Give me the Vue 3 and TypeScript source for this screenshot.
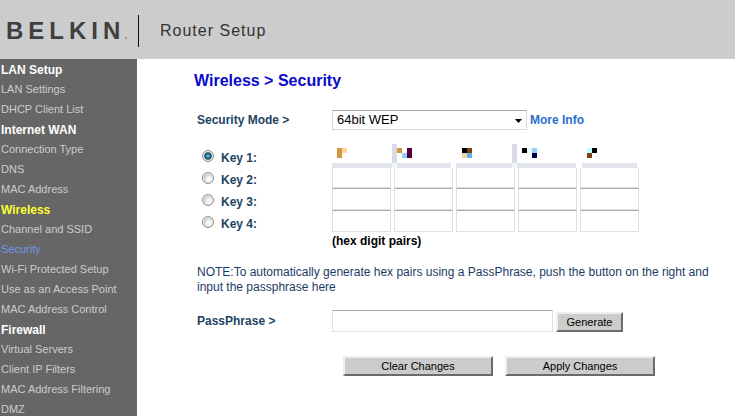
<script setup lang="ts">
import { ref } from 'vue'

interface NavGroup {
  title: string
  active?: boolean
  items: string[]
}

const groups: NavGroup[] = [
  { title: 'LAN Setup', items: ['LAN Settings', 'DHCP Client List'] },
  { title: 'Internet WAN', items: ['Connection Type', 'DNS', 'MAC Address'] },
  {
    title: 'Wireless',
    active: true,
    items: ['Channel and SSID', 'Security', 'Wi-Fi Protected Setup', 'Use as an Access Point', 'MAC Address Control'],
  },
  { title: 'Firewall', items: ['Virtual Servers', 'Client IP Filters', 'MAC Address Filtering', 'DMZ'] },
]

const current = 'Security'
const mode = ref('64bit WEP')
const activeKey = ref(1)
const passphrase = ref('')
const keys = ref<string[][]>(Array.from({ length: 4 }, () => Array<string>(5).fill('')))

function clearChanges() {
  passphrase.value = ''
  keys.value = keys.value.map((row) => row.map(() => ''))
}
</script>

<template>
  <div class="page">
    <header class="top">
      <div class="logo">BELKIN<span class="dot"></span></div>
      <div class="product">Router Setup</div>
    </header>
    <div class="body">
      <nav class="side">
        <template v-for="g in groups" :key="g.title">
          <h2 :class="{ active: g.active }">{{ g.title }}</h2>
          <a v-for="item in g.items" :key="item" href="#" :class="{ current: item === current }">{{ item }}</a>
        </template>
      </nav>
      <main class="content">
        <h1>Wireless &gt; Security</h1>
        <form @submit.prevent>
          <div class="row mode">
            <label class="name" for="mode">Security Mode &gt;</label>
            <div class="select">
              <select id="mode" v-model="mode">
                <option>Disabled</option>
                <option>64bit WEP</option>
                <option>128bit WEP</option>
              </select>
              <svg class="arrow" viewBox="0 0 7 4" aria-hidden="true"><path d="M0 0h7L3.5 4z" /></svg>
            </div>
            <a class="more" href="#">More Info</a>
          </div>

          <div class="keys">
            <div v-for="(row, r) in keys" :key="r" class="row key">
              <label class="name pick"><input v-model="activeKey" type="radio" name="key" :value="r + 1" />Key {{ r + 1 }}:</label>
              <div class="pairs" :class="{ masked: r === 0 }">
                <input v-for="(_, c) in row" :key="c" v-model="row[c]" type="text" maxlength="2" :aria-label="`Key ${r + 1} pair ${c + 1}`" />
                <svg v-if="r === 0" class="mask" viewBox="0 0 307 24" shape-rendering="crispEdges" aria-hidden="true">
                  <path fill="#e3e5ec" d="M0 19h60v5H0zM65 19h54v5H65zM124 19h56v5H124zM185 19h59v5H185zM250 19h55v5H250z" />
                  <path fill="#d9dce4" d="M60 0h5v19h-5zM180 0h5v19h-5z" />
                  <path fill="#f2f3f6" d="M60 19h5v5h-5zM180 19h5v5h-5z" />
                  <path fill="#fff" d="M119 19h5v5h-5zM244 19h6v5h-6zM305 19h2v5h-2z" />
                  <path fill="#d39443" d="M5 4h5v10H5zM65 4h5v5h-5z" />
                  <path fill="#ffd79a" d="M10 4h5v5h-5z" />
                  <path fill="#92cffb" d="M70 9h5v5h-5zM200 4h5v5h-5z" />
                  <path fill="#4f0037" d="M75 4h5v10h-5z" />
                  <path fill="#000" d="M130 4h5v5h-5zM190 4h5v5h-5zM260 4h5v5h-5z" />
                  <path fill="#7d400f" d="M135 4h5v5h-5zM255 9h5v5h-5z" />
                  <path fill="#efd6a0" d="M130 9h5v5h-5z" />
                  <path fill="#67ace8" d="M135 9h5v5h-5z" />
                  <path fill="#e4fffc" d="M195 4h5v5h-5z" />
                  <path fill="#bdfcfa" d="M255 4h5v5h-5z" />
                  <path fill="#00004e" d="M200 9h5v5h-5z" />
                </svg>
              </div>
            </div>
            <p class="hint">(hex digit pairs)</p>
          </div>

          <p class="note">
            NOTE:To automatically generate hex pairs using a PassPhrase, push the button on the right and<br />input the passphrase here
          </p>

          <div class="row phrase">
            <label class="name" for="phrase">PassPhrase &gt;</label>
            <input id="phrase" v-model="passphrase" type="text" />
            <button type="button">Generate</button>
          </div>

          <div class="actions">
            <button type="button" @click="clearChanges">Clear Changes</button>
            <button type="submit">Apply Changes</button>
          </div>
        </form>
      </main>
    </div>
  </div>
</template>

<style>
html {
  scrollbar-width: none;
}
body {
  background: #fff;
}
</style>

<style scoped>
.page {
  display: flex;
  flex-direction: column;
  min-height: 100vh;
  font: 12px/20px "Liberation Sans", Arial, sans-serif;
}
.page *,
.page *::before {
  box-sizing: border-box;
}
h1,
h2,
p {
  margin: 0;
}
.top {
  display: flex;
  align-items: center;
  height: 59px;
  padding-top: 3px;
  background: #ccc;
}
.logo {
  display: flex;
  align-items: center;
  width: 139px;
  height: 32px;
  padding-left: 6px;
  border-right: 1px solid #111;
  color: #3f3f3f;
  font: bold 24px/32px "Liberation Sans", Arial, sans-serif;
  letter-spacing: 5px;
}
.dot {
  flex: none;
  width: 2px;
  height: 2px;
  margin-top: 14px;
  background: #999;
}
.product {
  padding-left: 21px;
  color: #333;
  font-size: 16px;
  letter-spacing: 1px;
}
.body {
  display: flex;
  flex: 1;
}
.side {
  flex: none;
  width: 137px;
  padding: 1px 0 0 1px;
  background: #666;
}
.side h2 {
  color: #fff;
  font-size: 12px;
  line-height: 20px;
}
.side h2.active {
  color: #ff3;
}
.side a {
  display: block;
  padding-bottom: 2px;
  color: #ccc;
  font-size: 11px;
  line-height: 18px;
  text-decoration: none;
  white-space: nowrap;
}
.side a.current {
  color: #6f97e8;
}
.content {
  flex: 1;
  padding: 12px 0 20px 57px;
}
h1 {
  color: #0a0ac8;
  font-size: 16px;
  line-height: 20px;
}
form {
  padding: 19px 0 0 3px;
}
.row {
  display: flex;
  align-items: center;
}
.name {
  flex: none;
  width: 135px;
  color: #1d4463;
  font-weight: bold;
}
input,
select,
button {
  margin: 0;
  border-radius: 0;
  font: 12px/16px "Liberation Sans", Arial, sans-serif;
}
input[type="text"] {
  border: 1px solid #dfe0e6;
  border-top-color: #a9abb3;
  background: #fff;
  padding: 0 4px;
}
.select {
  position: relative;
  width: 195px;
}
select {
  display: block;
  width: 100%;
  height: 20px;
  padding: 0 4px;
  border: 1px solid #d6d8e0;
  border-top-color: #a9abb3;
  background: #fff;
  color: #000;
  font-size: 13px;
  line-height: 18px;
  appearance: none;
}
.arrow {
  position: absolute;
  top: 9px;
  right: 5px;
  width: 7px;
  height: 4px;
  pointer-events: none;
}
.more {
  margin-left: 3px;
  color: #2a6fd0;
  font-weight: bold;
  text-decoration: none;
}
.keys {
  padding-top: 14px;
}
.key {
  height: 22px;
}
.pick {
  display: flex;
  align-items: center;
  gap: 7px;
  padding: 5px 0 0 5px;
}
input[type="radio"] {
  width: 12px;
  height: 12px;
  margin-bottom: 3px;
  border: 1px solid #8e8f8f;
  border-radius: 50%;
  background: radial-gradient(circle at 60% 60%, #fafafa 0 20%, #c5c9cc 60%);
  box-shadow: inset 0 0 0 1px #f4f4f4;
  appearance: none;
}
input[type="radio"]:checked {
  background: radial-gradient(circle at 50% 50%, #4fb0d8 0 1px, #123c5c 3px, #f4f4f4 5px);
}
.pairs {
  display: grid;
  grid-template-columns: repeat(5, 59px);
  gap: 3px;
}
.pairs input {
  width: 100%;
  height: 22px;
}
.pairs.masked {
  position: relative;
  z-index: 1;
}
.pairs.masked input {
  border-color: transparent;
}
.mask {
  position: absolute;
  top: 0;
  left: 0;
  width: 307px;
  height: 24px;
  pointer-events: none;
}
.hint {
  padding-left: 135px;
  color: #000;
  font-weight: bold;
  line-height: 18px;
}
.note {
  padding-top: 15px;
  color: #1c3a66;
  line-height: 15px;
}
.phrase {
  padding-top: 15px;
}
.phrase input {
  width: 221px;
  height: 22px;
}
button {
  height: 20px;
  padding: 0;
  border: 2px solid;
  border-color: #eee #6b6b6b #6b6b6b #eee;
  background: #ccc;
  color: #000;
  font-size: 11px;
}
.phrase button {
  align-self: flex-end;
  width: 67px;
  margin-left: 3px;
}
.actions {
  display: flex;
  gap: 12px;
  padding: 24px 0 0 146px;
}
.actions button {
  width: 150px;
}
</style>
